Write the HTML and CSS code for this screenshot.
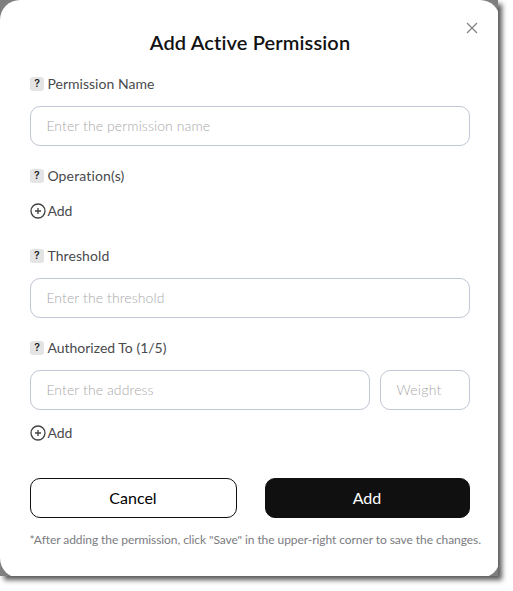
FILE: index.html
```html
<!DOCTYPE html>
<html lang="en">
<head>
<meta charset="utf-8">
<title>Add Active Permission</title>
<link rel="stylesheet" href="styles.css">
</head>
<body>
<div class="frame">
  <main class="dialog">
    <button class="close" aria-label="Close"><svg width="12" height="12" viewBox="0 0 12 12"><path d="M1 1l10 10M11 1L1 11"/></svg></button>
    <h1 class="title">Add Active Permission</h1>
    <label class="label"><span class="help">?</span>Permission Name</label>
    <input class="input" placeholder="Enter the permission name">
    <div class="label label-operations"><span class="help">?</span>Operation(s)</div>
    <div class="add add-operation"><svg class="plus" width="16" height="16" viewBox="0 0 16 16"><circle cx="8" cy="8" r="7"/><path d="M8 5v6M5 8h6"/></svg>Add</div>
    <label class="label label-threshold"><span class="help">?</span>Threshold</label>
    <input class="input" placeholder="Enter the threshold">
    <div class="label label-authorized"><span class="help">?</span>Authorized To (1/5)</div>
    <div class="row">
      <input class="input" placeholder="Enter the address">
      <input class="input weight" placeholder="Weight">
    </div>
    <div class="add add-address"><svg class="plus" width="16" height="16" viewBox="0 0 16 16"><circle cx="8" cy="8" r="7"/><path d="M8 5v6M5 8h6"/></svg>Add</div>
    <div class="actions">
      <button class="button cancel">Cancel</button>
      <button class="button primary">Add</button>
    </div>
    <p class="note">*After adding the permission, click "Save" in the upper-right corner to save the changes.</p>
  </main>
</div>
</body>
</html>
```

FILE: styles.css
```css
* { box-sizing: border-box; }
body {
  margin: 0;
  min-height: 591px;
  background: #fff;
  font-family: Lato, "Liberation Sans", sans-serif;
  font-variant-ligatures: none;
  color: #494a4d;
}
.frame {
  width: 498px;
  height: 576px;
  overflow: hidden;
  background: #7f7f7f;
  box-shadow: 4px 4px 5px rgba(0, 0, 0, 0.65);
}
.dialog {
  position: relative;
  width: 500px;
  height: 578px;
  padding: 30px 30px 0;
  border-radius: 20px;
  background: #fff;
}
.close {
  position: absolute;
  top: 22px;
  right: 22px;
  width: 12px;
  height: 12px;
  padding: 0;
  border: 0;
  background: none;
}
.close svg { display: block; fill: none; stroke: #858585; stroke-width: 1.3; }
.title {
  margin: 0 0 20px;
  font-size: 20px;
  line-height: 24px;
  font-weight: 600;
  letter-spacing: 0.13px;
  text-align: center;
  color: #121212;
}
.label {
  display: flex;
  align-items: center;
  height: 20px;
  margin-bottom: 12px;
  font-size: 14px;
  line-height: 20px;
  letter-spacing: 0.03px;
}
.label-operations { margin-top: 20px; margin-bottom: 15px; letter-spacing: 0.15px; }
.label-threshold { margin-top: 25px; letter-spacing: 0.1px; }
.label-authorized { margin-top: 20px; letter-spacing: 0; }
.help {
  width: 14px;
  height: 14px;
  margin-right: 3.4px;
  border-radius: 3px;
  background: #e4e4e4;
  color: #222;
  font-family: Inter, sans-serif;
  font-size: 10.5px;
  line-height: 14px;
  font-weight: 600;
  text-align: center;
}
.input {
  display: block;
  width: 100%;
  height: 40px;
  padding: 0 15.4px 2px;
  border: 1px solid #c1c6d4;
  border-radius: 10px;
  background: #fff;
  font: 300 14px Lato, "Liberation Sans", sans-serif;
  letter-spacing: 0.1px;
  color: #494a4d;
}
.input::placeholder { color: #a8a8aa; opacity: 1; }
.row { display: flex; gap: 10px; }
.weight { flex: none; width: 90px; letter-spacing: 0.3px; }
.add {
  display: flex;
  align-items: center;
  height: 20px;
  font-size: 14px;
  line-height: 20px;
}
.plus { margin-right: 1.4px; fill: none; stroke: #404144; stroke-width: 1.3; }
.add-address { margin-top: 13px; }
.actions { display: grid; grid-template-columns: 207px 205px; gap: 28px; margin-top: 35px; }
.button {
  height: 40px;
  padding: 0 1px 2px 0;
  border: 1px solid #101010;
  border-radius: 10px;
  font: 16px Lato, "Liberation Sans", sans-serif;
}
.cancel { background: #fff; color: #000; }
.primary { background: #101010; color: #fff; }
.note {
  margin: 14px 0 0 -0.5px;
  font-size: 12px;
  line-height: 16px;
  letter-spacing: -0.07px;
  white-space: nowrap;
  color: #7b7c7f;
}
```
